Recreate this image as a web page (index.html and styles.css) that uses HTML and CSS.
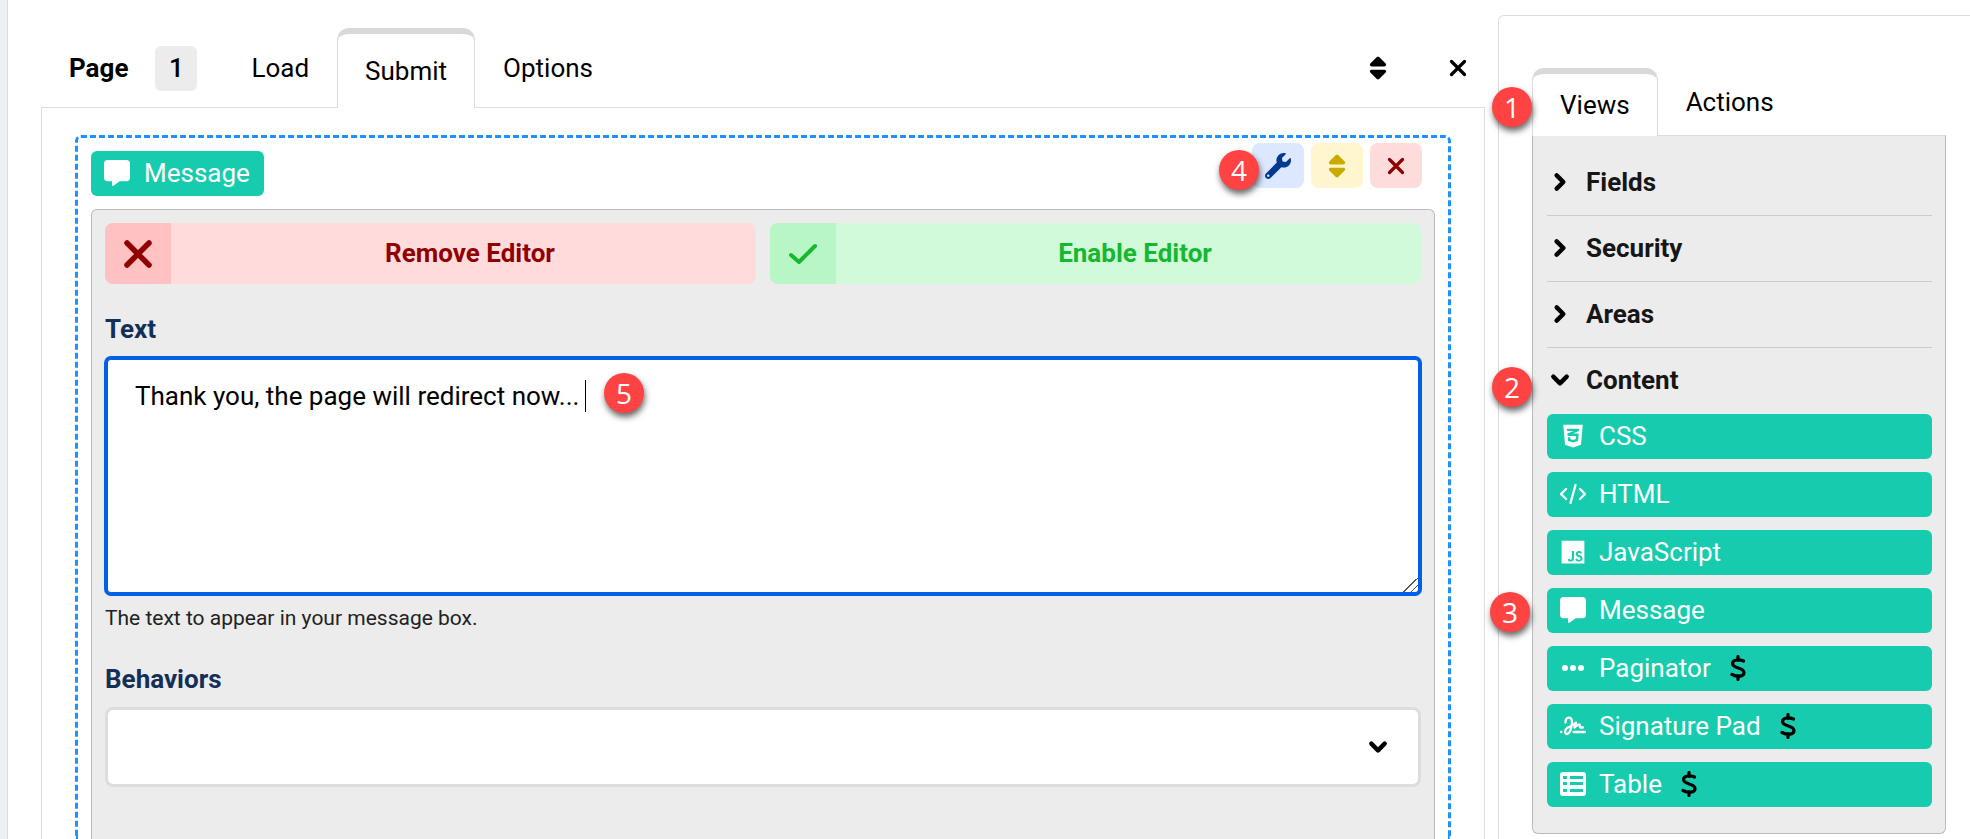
FILE: index.html
```html
<!DOCTYPE html>
<html lang="en">
<head>
<meta charset="utf-8">
<title>Form Builder</title>
<link rel="stylesheet" href="styles.css">
</head>
<body>
<svg class="defs" aria-hidden="true">
  <symbol id="sort" viewBox="0 0 320 512"><path d="M137.400 41.400c12.500-12.500 32.800-12.500 45.300 0l128 128c9.200 9.200 11.900 22.900 6.900 34.900s-16.600 19.800-29.600 19.800H32c-12.900 0-24.600-7.800-29.600-19.800s-2.200-25.700 6.900-34.900l128-128zm0 429.300l-128-128c-9.200-9.200-11.900-22.900-6.900-34.900s16.600-19.800 29.600-19.800H288c12.900 0 24.600 7.800 29.600 19.800s2.200 25.700-6.900 34.900l-128 128c-12.500 12.500-32.800 12.500-45.300 0z"/></symbol>
  <symbol id="close" viewBox="0 0 384 512"><path d="M64 128l256 256M320 128L64 384" fill="none" stroke="currentColor" stroke-width="64" stroke-linecap="round"/></symbol>
  <symbol id="check" viewBox="0 0 30 22"><path d="M3 12l8 7L27 3" fill="none" stroke="currentColor" stroke-width="4" stroke-linecap="round" stroke-linejoin="round"/></symbol>
  <symbol id="chevron" viewBox="0 0 18 18"><path d="M6 3l6 6-6 6" fill="none" stroke="currentColor" stroke-width="4" stroke-linecap="round" stroke-linejoin="round"/></symbol>
  <symbol id="wrench" viewBox="0 0 512 512"><path d="M507.730 109.100c-2.240-9.030-13.540-12.090-20.120-5.510l-74.360 74.360-67.880-11.310-11.310-67.880 74.360-74.360c6.620-6.620 3.430-17.900-5.660-20.160-47.380-11.740-99.550.91-136.580 37.930-39.640 39.640-50.550 97.100-34.050 147.200L18.740 402.760c-24.990 24.990-24.990 65.510 0 90.500 24.990 24.990 65.510 24.990 90.500 0l213.210-213.210c50.120 16.710 107.470 5.680 147.370-34.220 37.070-37.070 49.700-89.320 37.910-136.730zM64 472c-13.250 0-24-10.750-24-24 0-13.260 10.750-24 24-24s24 10.740 24 24c0 13.250-10.750 24-24 24z"/></symbol>
  <symbol id="message" viewBox="0 0 512 512"><path d="M64 0C28.700 0 0 28.700 0 64V352c0 35.300 28.700 64 64 64h96v80c0 6.100 3.400 11.600 8.800 14.300s11.900 2.100 16.800-1.500L309.300 416H448c35.300 0 64-28.700 64-64V64c0-35.300-28.700-64-64-64H64z"/></symbol>
  <symbol id="css" viewBox="0 0 384 512"><path d="M0 32l34.900 395.800L192 480l157.100-52.200L384 32H0zm313.100 80l-4.800 47.300L193 208.600l-.3.1h111.500l-12.800 146.600-98.200 28.700-98.800-29.200-6.400-73.900h48.900l3.200 38.300 52.600 13.300 54.700-15.400 3.700-61.600-166.300-.5v-.1l-.2.1-3.600-46.300L193.100 162l6.500-2.700H76.700L70.900 112h242.200z"/></symbol>
  <symbol id="code" viewBox="0 0 26 26"><path d="M6 8l-5 5 5 5M20 8l5 5-5 5M15.500 4l-5 18" fill="none" stroke="currentColor" stroke-width="2.300" stroke-linecap="round" stroke-linejoin="round"/></symbol>
  <symbol id="js" viewBox="0 0 448 512"><path d="M0 32v448h448V32H0zm243.800 349.400c0 43.600-25.600 63.500-62.900 63.500-33.700 0-53.200-17.400-63.200-38.500l34.300-20.700c6.600 11.700 12.600 21.600 27.100 21.600 13.800 0 22.600-5.400 22.600-26.500V237.700h42.100v143.700zm99.600 63.500c-39.100 0-64.400-18.600-76.700-43l34.300-19.800c9 14.700 20.800 25.600 41.500 25.600 17.400 0 28.600-8.700 28.600-20.800 0-14.400-11.400-19.500-30.700-28l-10.500-4.500c-30.400-12.900-50.500-29.200-50.500-63.500 0-31.600 24.100-55.600 61.600-55.600 26.800 0 46 9.300 59.800 33.700L368 290c-7.200-12.900-15-18-27.100-18-12.300 0-20.100 7.800-20.100 18 0 12.600 7.800 17.700 25.900 25.600l10.500 4.500c35.800 15.300 55.900 31 55.900 66.200 0 37.800-29.800 58.600-69.700 58.600z"/></symbol>
  <symbol id="dots" viewBox="0 0 26 26"><circle cx="5" cy="13" r="3"/><circle cx="13" cy="13" r="3"/><circle cx="21" cy="13" r="3"/></symbol>
  <symbol id="signature" viewBox="0 0 26 26"><path d="M5.500 9.500C5.500 3.500 12 3 12 8.500c0 5-2 12.500-5 12.500S4.500 15.500 9 14c3-1 5-2.500 7-4.500l-1.500 5c2-1.500 4-3.500 5-3s-.5 3 1 3H23M1 19h.5M13.500 19H25" fill="none" stroke="currentColor" stroke-width="2.300" stroke-linecap="round" stroke-linejoin="round"/></symbol>
  <symbol id="table" viewBox="0 0 26 26"><path fill-rule="evenodd" d="M3 1h20a3 3 0 013 3v18a3 3 0 01-3 3H3a3 3 0 01-3-3V4a3 3 0 013-3zM3 5v3h4V5zM10 5v3h13V5zM3 11v3h4v-3zM10 11v3h13v-3zM3 18v3h4v-3zM10 18v3h13v-3z"/></symbol>
  <symbol id="dollar" viewBox="0 0 16 26"><path d="M8 1.500v4M8 20.500v4M13.500 6C9 4 2.500 4.500 2.500 8.500c0 5.500 11.500 3.500 11.500 9 0 4.500-7 4.500-12 2" fill="none" stroke="currentColor" stroke-width="3.200" stroke-linecap="round" stroke-linejoin="round"/></symbol>
</svg>

<div class="app">
  <main class="editor">
    <header class="page-bar">
      <strong class="page-title">Page</strong>
      <span class="page-number">1</span>
      <nav class="tabs">
        <a class="tab" href="#load">Load</a>
        <a class="tab active" href="#submit">Submit</a>
        <a class="tab" href="#options">Options</a>
      </nav>
      <div class="page-tools">
        <button type="button" aria-label="Move page"><svg class="icon"><use href="#sort"/></svg></button>
        <button type="button" aria-label="Delete page"><svg class="icon"><use href="#close"/></svg></button>
      </div>
    </header>

    <section class="page-body">
      <article class="view">
        <div class="view-head">
          <button type="button" class="chip"><svg class="icon"><use href="#message"/></svg>Message</button>
          <div class="view-tools">
            <button type="button" class="tool blue" aria-label="Settings"><svg class="icon"><use href="#wrench"/></svg></button>
            <button type="button" class="tool yellow" aria-label="Move"><svg class="icon"><use href="#sort"/></svg></button>
            <button type="button" class="tool red" aria-label="Remove"><svg class="icon"><use href="#close"/></svg></button>
            <span class="step step-4">4</span>
          </div>
        </div>
        <form class="settings">
          <div class="editor-actions">
            <button type="button" class="wide remove"><span class="wide-icon"><svg class="cross"><use href="#close"/></svg></span><span class="wide-text">Remove Editor</span></button>
            <button type="button" class="wide enable"><span class="wide-icon"><svg class="tick"><use href="#check"/></svg></span><span class="wide-text">Enable Editor</span></button>
          </div>
          <label class="label" for="text">Text</label>
          <div class="text-wrap">
            <textarea id="text" class="textarea" autofocus>Thank you, the page will redirect now...</textarea>
            <span class="caret"></span>
            <span class="step step-5">5</span>
          </div>
          <p class="help">The text to appear in your message box.</p>
          <label class="label" for="behaviors">Behaviors</label>
          <div class="select-wrap">
            <select id="behaviors" class="select"><option></option></select>
            <svg class="chevron down select-arrow"><use href="#chevron"/></svg>
          </div>
        </form>
      </article>
    </section>
  </main>

  <aside class="sidebar">
    <nav class="tabs side-tabs">
      <a class="tab active" href="#views">Views</a>
      <a class="tab" href="#actions">Actions</a>
      <span class="step step-1">1</span>
    </nav>
    <div class="library">
      <button type="button" class="group"><svg class="chevron"><use href="#chevron"/></svg>Fields</button>
      <button type="button" class="group"><svg class="chevron"><use href="#chevron"/></svg>Security</button>
      <button type="button" class="group"><svg class="chevron"><use href="#chevron"/></svg>Areas</button>
      <button type="button" class="group open"><svg class="chevron down"><use href="#chevron"/></svg>Content</button>
      <span class="step step-2">2</span>
      <div class="items">
        <button type="button" class="chip"><svg class="icon"><use href="#css"/></svg>CSS</button>
        <button type="button" class="chip"><svg class="icon"><use href="#code"/></svg>HTML</button>
        <button type="button" class="chip"><svg class="icon"><use href="#js"/></svg>JavaScript</button>
        <button type="button" class="chip"><svg class="icon"><use href="#message"/></svg>Message<span class="step step-3">3</span></button>
        <button type="button" class="chip"><svg class="icon"><use href="#dots"/></svg>Paginator<svg class="dollar"><use href="#dollar"/></svg></button>
        <button type="button" class="chip"><svg class="icon"><use href="#signature"/></svg>Signature Pad<svg class="dollar"><use href="#dollar"/></svg></button>
        <button type="button" class="chip"><svg class="icon"><use href="#table"/></svg>Table<svg class="dollar"><use href="#dollar"/></svg></button>
      </div>
    </div>
  </aside>
</div>
</body>
</html>
```
FILE: styles.css
```css
* { box-sizing: border-box; }

body {
  margin: 0;
  overflow: hidden;
  background: #fff;
  color: #000;
  font: 26px/32px Roboto, "Liberation Sans", sans-serif;
}

button, select, textarea { font: inherit; color: inherit; }
button { border: 0; padding: 0; background: none; cursor: pointer; }
.defs { display: none; }
.icon { width: 26px; height: 26px; fill: currentColor; flex: none; }

.app {
  display: flex;
  gap: 13px;
  height: 100vh;
  border-left: 7px solid #ebf0f5;
  box-shadow: inset 1px 0 #ddd;
}

/* Page editor */
.editor {
  flex: 1;
  min-width: 0;
  display: flex;
  flex-direction: column;
  padding: 28px 0 0 34px;
}
.page-bar {
  display: flex;
  align-items: center;
  height: 80px;
  padding-left: 28px;
  margin-bottom: -1px;
}
.page-title { font-weight: 700; }
.page-number {
  margin: 0 26px 0 27px;
  width: 42px;
  padding: 6px 0 7px;
  border-radius: 6px;
  background: #ececec;
  text-align: center;
  font-weight: 500;
}
.tabs { display: flex; align-self: stretch; }
.tab {
  display: flex;
  align-items: center;
  padding: 0 28px;
  color: #000;
  text-decoration: none;
}
.tab.active {
  position: relative;
  border: 1px solid #ddd;
  border-top: 6px solid #d9d9d9;
  border-bottom: 0;
  border-radius: 12px 12px 0 0;
  background: #fff;
  padding: 0 27px;
}
.page-tools { display: flex; gap: 54px; margin-left: auto; padding-right: 14px; }
.page-tools button { display: flex; }

.page-body {
  flex: 1;
  border: 1px solid #ddd;
  border-bottom: 0;
  padding: 27px 33px 0;
  display: flex;
}
.view {
  flex: 1;
  display: flex;
  flex-direction: column;
  border: 3px dashed #1e90ff;
  border-bottom: 0;
  border-radius: 6px 6px 0 0;
  padding: 0 13px;
}
.view-head { display: flex; justify-content: space-between; padding: 13px 0; }
.chip {
  position: relative;
  display: flex;
  align-items: center;
  gap: 13px;
  height: 45px;
  padding: 0 14px 1px 13px;
  border-radius: 6px;
  background: #17ccae;
  color: #fff;
}
.view-head .chip { gap: 14px; }
.view-tools { position: relative; display: flex; gap: 7px; align-self: flex-start; margin: -8px 13px 0 0; }
.tool { display: grid; place-items: center; width: 52px; height: 45px; border-radius: 8px; }
.blue { background: #dbe8ff; color: #003a8f; }
.yellow { background: #fff6cf; color: #c9ab00; }
.red { background: #ffdcdc; color: #900000; }

.settings {
  flex: 1;
  padding: 13px;
  border: 1px solid #bbb;
  border-bottom: 0;
  border-radius: 6px 6px 0 0;
  background: #ececec;
}
.editor-actions { display: grid; grid-template-columns: 1fr 1fr; gap: 14px; margin-bottom: 28px; }
.wide { display: flex; height: 61px; overflow: hidden; border-radius: 8px; font-weight: 700; }
.wide-icon { display: grid; place-items: center; width: 66px; height: 100%; }
.wide-text { flex: 1; align-self: center; padding: 0 0 2px 13px; }
.remove { background: #ffdbdb; color: #900000; }
.remove .wide-icon { background: #ffc1c1; }
.enable { background: #d0fad9; color: #15b82f; }
.enable .wide-icon { background: #b9f6c5; }
.cross { width: 44px; height: 44px; }
.tick { width: 30px; height: 22px; }

.label { display: block; margin-bottom: 12px; padding-top: 1px; color: #132f57; font-weight: 700; }
.text-wrap, .select-wrap { position: relative; }
.textarea {
  display: block;
  width: 100%;
  height: 238px;
  padding: 20px 27px;
  border: 3px solid #0060e6;
  border-radius: 6px;
  outline: 0;
  box-shadow: 0 0 0 1px #0060e6;
  background: #fff;
  caret-color: transparent;
  resize: vertical;
}
.textarea::-webkit-resizer {
  background: linear-gradient(135deg, transparent 50%, #555 50%, #555 56%, transparent 56%, transparent 74%, #555 74%, #555 80%, transparent 80%);
}
.caret { position: absolute; left: 480px; top: 23px; width: 1px; height: 32px; background: #000; }
.help { margin: 10px 0 31px; font-size: 21px; line-height: 26px; color: #222; }
.select {
  display: block;
  width: 100%;
  height: 80px;
  padding: 0 28px;
  border: 3px solid #ddd;
  border-radius: 8px;
  background: #fff;
  appearance: none;
}
.chevron { width: 20px; height: 20px; flex: none; }
.down { transform: rotate(90deg); }
.select-arrow { position: absolute; right: 33px; top: 30px; color: #000; }

/* Library */
.sidebar {
  flex: 0 0 472px;
  margin-top: 15px;
  padding: 52px 24px 0 33px;
  border: 1px solid #ddd;
  border-right: 0;
  border-bottom: 0;
  border-radius: 6px 0 0 0;
}
.side-tabs { position: relative; height: 68px; margin-bottom: -1px; }
.library {
  position: relative;
  padding: 14px 13px 26px 14px;
  border: 1px solid #bbb;
  border-top-color: #ddd;
  border-radius: 0 0 6px 6px;
  background: #ececec;
}
.side-tabs .active { z-index: 1; }
.group {
  display: flex;
  align-items: center;
  gap: 16px;
  width: 100%;
  height: 66px;
  padding: 0 0 2px 3px;
  border-bottom: 1px solid #ccc;
  color: #161616;
  font-weight: 700;
}
.group .chevron { color: #000; }
.group.open { border-bottom: 0; }
.items { display: grid; gap: 13px; }
.items .chip { text-align: left; }
.dollar { width: 16px; height: 26px; color: #000; margin-left: 6px; }

/* Numbered callouts */
.step {
  position: absolute;
  z-index: 2;
  width: 40px;
  height: 40px;
  border-radius: 50%;
  background: #ff4242;
  box-shadow: 1px 4px 6px rgba(0, 0, 0, .6);
  color: #fff;
  font: 28px/40px "Open Sans", "Noto Sans", sans-serif;
  text-align: center;
}
.step-1 { left: -40px; top: 19px; }
.step-2 { left: -41px; top: 231px; }
.step-3 { left: -57px; top: 4px; }
.step-4 { left: -33px; top: 7px; }
.step-5 { left: 499px; top: 16px; }
```
